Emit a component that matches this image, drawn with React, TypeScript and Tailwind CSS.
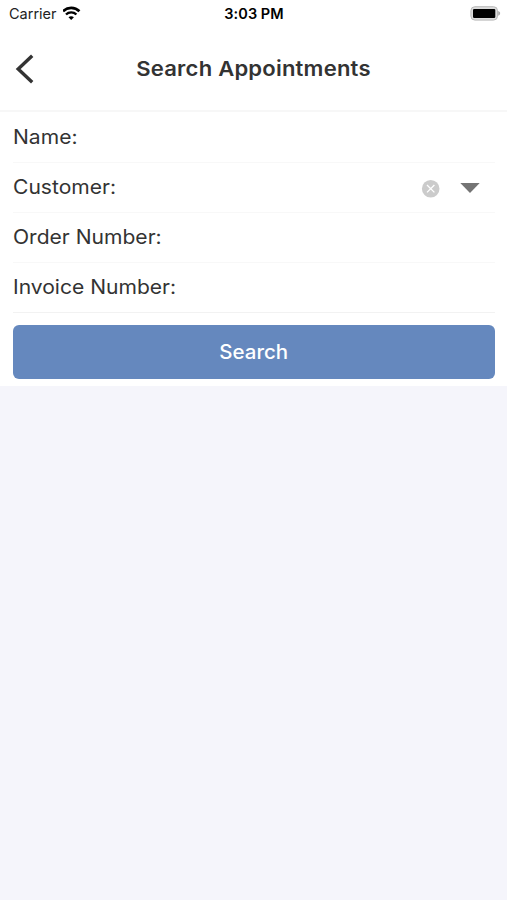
import { useState } from "react";

function StatusBar() {
  return (
    <div className="grid h-7 grid-cols-3 items-center pl-[9px] pr-[6px] text-black">
      <div className="flex items-center gap-[6px]">
        <span className="text-[14.5px] leading-none text-[#222]">Carrier</span>
        <svg className="-mt-0.5" width="18" height="14" viewBox="0 0 18 14" fill="none" stroke="currentColor">
          <path d="M0 5.3C4.4.8 12 .8 16.4 5.3" strokeWidth="2.7" />
          <path d="M3 8.5c2.8-2.8 7.6-2.8 10.4 0" strokeWidth="2.4" />
          <path d="M8.2 14 5.5 11.2c1.5-1.4 3.9-1.4 5.4 0Z" fill="currentColor" stroke="none" />
        </svg>
      </div>
      <span className="-ml-[2px] text-center text-[14.5px] font-semibold leading-none tracking-[0.05px]">3:03 PM</span>
      <svg className="justify-self-end" width="31" height="16" viewBox="0 0 31 16">
        <rect x="0.9" y="0.7" width="26.6" height="13.4" rx="4" fill="#dcdcdc" stroke="#b9b9b9" />
        <rect x="3" y="2.9" width="22.3" height="9.1" rx="1.2" fill="#000" />
        <path d="M28.2 5c2.6.8 2.6 3.8 0 4.7Z" fill="#a9a9a9" />
      </svg>
    </div>
  );
}

function Field({ label, children }: { label: string; children?: React.ReactNode }) {
  return (
    <div className="flex h-[50px] items-center justify-between border-b border-[#f8f8f8] pr-[15px] pt-px last-of-type:border-[#f2f2f2]">
      <span className="origin-left scale-x-[1.08]">{label}</span>
      {children}
    </div>
  );
}

export default function App() {
  const [hasCustomer, setHasCustomer] = useState(true);

  return (
    <div className="min-h-screen bg-[#f5f5fb] font-['Inter',sans-serif] text-[#333]">
      <div className="h-[386px] bg-white">
        <StatusBar />

        <header className="grid h-[84px] grid-cols-[60px_1fr_60px] items-center border-b-2 border-[#f7f7f7]">
          <button className="pl-[15px]" aria-label="Back">
            <svg width="19" height="30" viewBox="0 0 19 30" fill="none" stroke="#333" strokeWidth="3.4">
              <path d="M17.2 1.8 3.2 15l14 13.2" />
            </svg>
          </button>
          <h1 className="scale-x-[1.075] text-center text-[20.5px] font-[560] tracking-[0.2px]">Search Appointments</h1>
        </header>

        <form
          className="pl-[13px] pr-3 pt-px text-[19.5px] font-normal"
          onSubmit={(e) => e.preventDefault()}
        >
          <Field label="Name:" />
          <Field label="Customer:">
            <div className="flex items-center gap-[20px]">
              <button
                type="button"
                aria-label="Clear customer"
                className={hasCustomer ? "" : "invisible"}
                onClick={() => setHasCustomer(false)}
              >
                <svg width="19" height="19" viewBox="0 0 19 19">
                  <circle cx="9.7" cy="9.7" r="8.8" fill="#cbcbcb" />
                  <path d="m6 6 7.4 7.4M13.4 6 6 13.4" stroke="#fff" strokeWidth="1.3" />
                </svg>
              </button>
              <svg width="20" height="11" viewBox="0 0 20 11">
                <path d="M.3 0h19.4L10 10Z" fill="#747474" />
              </svg>
            </div>
          </Field>
          <Field label="Order Number:" />
          <Field label="Invoice Number:" />
          <button className="mt-3 h-[54px] w-full rounded-md bg-[#6588be] pt-0.5 font-medium text-white">
            <span className="inline-block scale-x-[1.05]">Search</span>
          </button>
        </form>
      </div>
    </div>
  );
}
